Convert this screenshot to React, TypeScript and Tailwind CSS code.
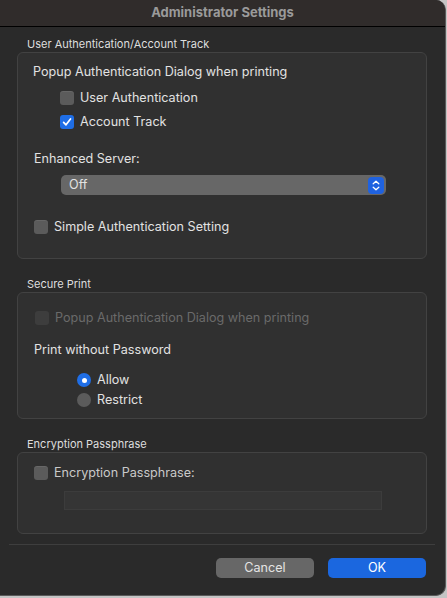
import { useState } from "react";

const font = { fontFamily: "Inter, 'Liberation Sans', sans-serif" };

function Check({ checked, disabled }: { checked?: boolean; disabled?: boolean }) {
  if (checked)
    return (
      <span className="flex h-[14px] w-[14px] shrink-0 items-center justify-center rounded-[3px] bg-[#1f6ee6]">
        <svg width="10" height="10" viewBox="0 0 10 10" fill="none">
          <path d="M1.6 5.3 L4 7.8 L8.5 2" stroke="white" strokeWidth="1.7" strokeLinecap="round" strokeLinejoin="round" />
        </svg>
      </span>
    );
  return (
    <span
      className={
        disabled
          ? "h-[14px] w-[14px] shrink-0 rounded-[3px] bg-[#3d3d3d]"
          : "h-[14px] w-[14px] shrink-0 rounded-[3px] bg-[#5b5b5b] shadow-[inset_0_1px_0_rgba(255,255,255,0.08)]"
      }
    />
  );
}

function Radio({ on }: { on?: boolean }) {
  return on ? (
    <span className="flex h-[14px] w-[14px] shrink-0 items-center justify-center rounded-full bg-[#1f6ee6]">
      <span className="h-[5px] w-[5px] rounded-full bg-white" />
    </span>
  ) : (
    <span className="h-[14px] w-[14px] shrink-0 rounded-full bg-[#5b5b5b]" />
  );
}

export default function App() {
  const [acct, setAcct] = useState(true);
  return (
    <div className="h-[598px] w-[447px] bg-[#c4c4c4]" style={font}>
      <div className="flex h-[596px] w-[446px] flex-col overflow-hidden rounded-r-[10px] border-r border-b border-[#5a5a5a] bg-[#2a2a2a]">
        {/* title bar */}
        <div className="flex h-[27px] shrink-0 items-center justify-center border-b border-black bg-[#302c2b]">
          <span className="text-[13px] font-bold text-[#9a9a9a]">Administrator Settings</span>
        </div>

        <div className="flex flex-col pl-[17px]">
          {/* User auth */}
          <div className="mt-[10px] pl-[10px] text-[11px] leading-[14px] text-[#dedede]">User Authentication/Account Track</div>
          <div className="mt-[1px] flex h-[207px] w-[410px] flex-col rounded-[6px] border border-[#424242] bg-[#303030] pt-[11px] text-[12.6px] leading-[16px] text-[#e2e2e2]">
            <div className="ml-[15px]">Popup Authentication Dialog when printing</div>
            <div className="ml-[42px] mt-[8px] flex h-[20px] items-center gap-[6px]">
              <Check />
              <span>User Authentication</span>
            </div>
            <div className="ml-[42px] mt-[4px] flex h-[20px] cursor-default items-center gap-[6px]" onClick={() => setAcct(!acct)}>
              <Check checked={acct} />
              <span>Account Track</span>
            </div>
            <div className="ml-[16px] mt-[19px]">Enhanced Server:</div>
            <div className="ml-[43px] mt-[8px] flex h-[20px] w-[325px] items-center justify-between rounded-[5px] bg-[#676767] pl-[8px] pr-[2px]">
              <span>Off</span>
              <span className="flex h-[17px] w-[16px] items-center justify-center rounded-[4px] bg-[#1f62e0]">
                <svg width="8" height="11" viewBox="0 0 8 11" fill="none">
                  <path d="M1.2 3.8 L4 1.2 L6.8 3.8 M1.2 7.2 L4 9.8 L6.8 7.2" stroke="white" strokeWidth="1.3" strokeLinecap="round" strokeLinejoin="round" />
                </svg>
              </span>
            </div>
            <div className="ml-[16px] mt-[22px] flex h-[20px] items-center gap-[6px]">
              <Check />
              <span>Simple Authentication Setting</span>
            </div>
          </div>

          {/* Secure print */}
          <div className="mt-[18px] pl-[10px] text-[11px] leading-[14px] text-[#dedede]">Secure Print</div>
          <div className="mt-[1px] flex h-[127px] w-[410px] flex-col rounded-[6px] border border-[#424242] bg-[#303030] pt-[15px] text-[12.6px] leading-[16px] text-[#e2e2e2]">
            <div className="ml-[17px] flex h-[20px] items-center gap-[6px] text-[#6a6a6a]">
              <Check disabled />
              <span>Popup Authentication Dialog when printing</span>
            </div>
            <div className="ml-[16px] mt-[14px]">Print without Password</div>
            <div className="ml-[59px] mt-[12px] flex h-[20px] items-center gap-[6px]">
              <Radio on />
              <span>Allow</span>
            </div>
            <div className="ml-[59px] flex h-[20px] items-center gap-[6px]">
              <Radio />
              <span>Restrict</span>
            </div>
          </div>

          {/* Encryption */}
          <div className="mt-[18px] pl-[10px] text-[11px] leading-[14px] text-[#dedede]">Encryption Passphrase</div>
          <div className="mt-[1px] flex h-[82px] w-[410px] flex-col rounded-[6px] border border-[#424242] bg-[#303030] pt-[10px] text-[12.6px] leading-[16px] text-[#c9c9c9]">
            <div className="ml-[16px] flex h-[20px] items-center gap-[6px]">
              <Check />
              <span>Encryption Passphrase:</span>
            </div>
            <div className="ml-[46px] mt-[8px] h-[19px] w-[318px] border border-[#3c3c3c] bg-[#353535]" />
          </div>
        </div>

        <div className="ml-[9px] mt-[10px] h-px w-[426px] bg-[#3e3e3e]" />

        <div className="mt-[13px] flex justify-end gap-[14px] pr-[19px] text-[12.6px]">
          <button className="h-[20px] w-[98px] rounded-[5px] bg-[#676767] text-[#e4e4e4]">Cancel</button>
          <button className="h-[20px] w-[98px] rounded-[5px] bg-[#1b67df] text-white">OK</button>
        </div>
      </div>
    </div>
  );
}
